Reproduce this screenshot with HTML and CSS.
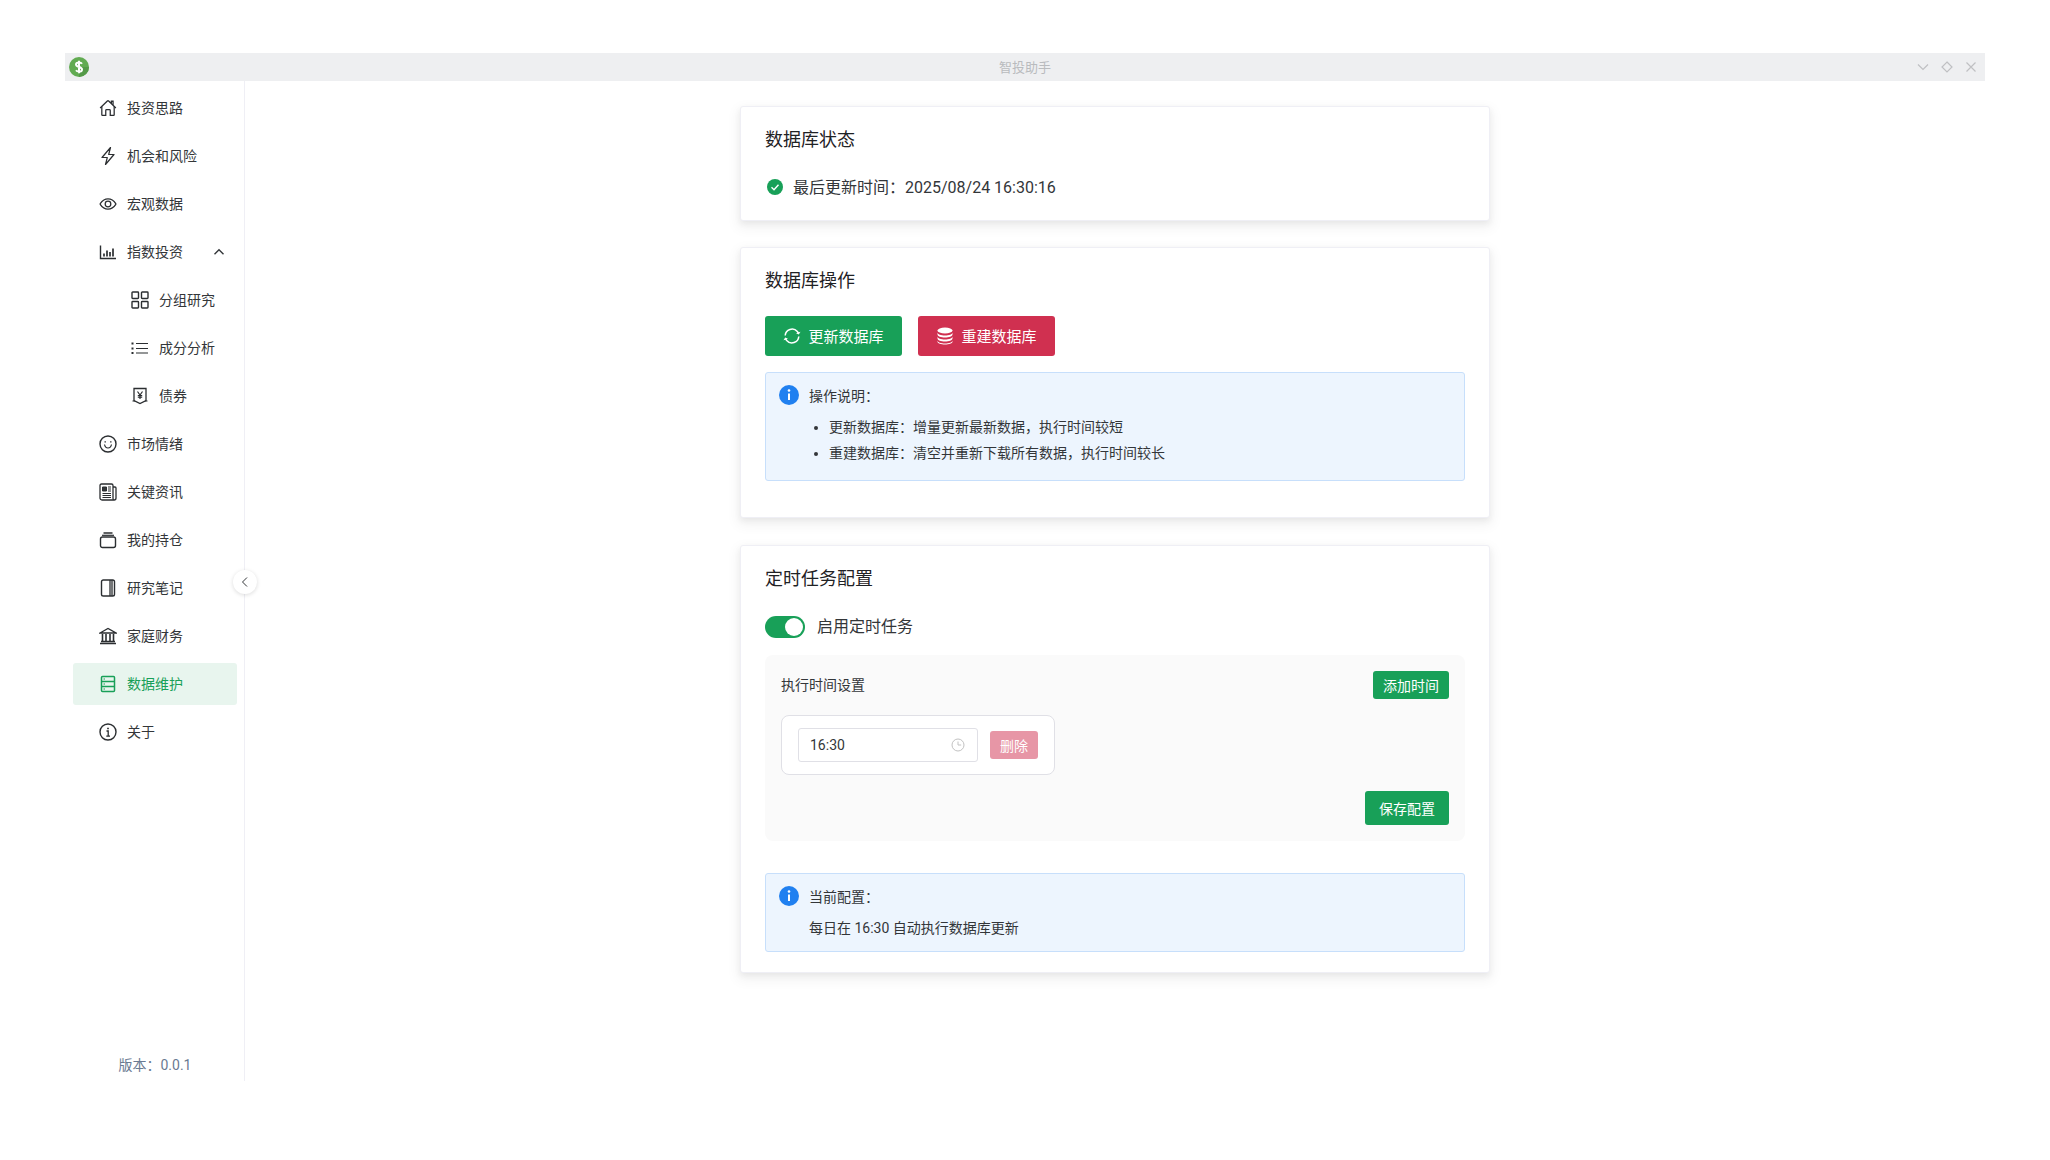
FILE: index.html
```html
<!DOCTYPE html>
<html lang="zh-CN">
<head>
<meta charset="utf-8">
<title>智投助手</title>
<link rel="stylesheet" href="styles.css">
</head>
<body>
<div class="window">
  <header class="titlebar">
    <svg class="logo" viewBox="0 0 20 20"><circle cx="10" cy="10" r="10" fill="#62ab52"/><path d="M10 10 20 10A10 10 0 0 1 10 20Z" fill="#549a48"/><path d="M13 6.700C12.400 5.800 11.300 5.400 10 5.400 8.300 5.400 7 6.200 7 7.600 7 9 8.300 9.500 10 10 11.700 10.500 13 11 13 12.400 13 13.800 11.700 14.600 10 14.600 8.700 14.600 7.600 14.200 7 13.300M10 3.800V16.200" fill="none" stroke="#fff" stroke-width="2"/></svg>
    <span class="title">智投助手</span>
    <div class="winctl">
      <svg viewBox="0 0 12 12"><path d="M1 3.500 6 8.500 11 3.500"/></svg>
      <svg viewBox="0 0 12 12"><path d="M6 1 11 6 6 11 1 6Z"/></svg>
      <svg viewBox="0 0 12 12"><path d="M1.500 1.500 10.500 10.500M10.500 1.500 1.500 10.500"/></svg>
    </div>
  </header>
  <div class="body">
    <aside class="sidebar">
      <nav class="menu">
        <a class="item"><svg class="ic" viewBox="0 0 512 512"><path d="M80 212v236a16 16 0 0 0 16 16h96V328a24 24 0 0 1 24-24h80a24 24 0 0 1 24 24v136h96a16 16 0 0 0 16-16V212"/><path d="M480 256 266.900 52c-5-5.300-16.700-5.300-21.800 0L32 256M400 179V64h-48v69"/></svg>投资思路</a>
        <a class="item"><svg class="ic" viewBox="0 0 18 18"><path d="M11.500 .5 3 10.500H8.300L6.500 17.500 15 7.500H9.700Z" stroke-width="1.200" stroke-linejoin="round"/></svg>机会和风险</a>
        <a class="item"><svg class="ic" viewBox="0 0 512 512"><path d="M255.700 112C178 112 98.300 157 35.500 247a16 16 0 0 0-.3 17.800C83.500 340.400 162.200 400 255.700 400c92.500 0 173-59.800 221.400-135.500a16.200 16.200 0 0 0 0-17.500C428.600 172 347.600 112 255.700 112Z"/><circle cx="256" cy="256" r="80"/></svg>宏观数据</a>
        <a class="item"><svg class="ic" viewBox="0 0 18 18"><path d="M1.500 2.500V15.500H17" stroke-width="1.400"/><path d="M5 13.500V10.500M8 13.500V7.500M11 13.500V9M14 13.500V5.500" stroke-width="1.700"/></svg>指数投资<svg class="chev" viewBox="0 0 12 12"><path d="M1.500 8.200 6 3.800 10.500 8.200"/></svg></a>
        <a class="item child"><svg class="ic" viewBox="0 0 18 18"><rect x="1" y="1" width="6.500" height="6.500" rx=".7" stroke-width="1.400"/><rect x="10.500" y="1" width="6.500" height="6.500" rx=".7" stroke-width="1.400"/><rect x="1" y="10.500" width="6.500" height="6.500" rx=".7" stroke-width="1.400"/><rect x="10.500" y="10.500" width="6.500" height="6.500" rx=".7" stroke-width="1.400"/></svg>分组研究</a>
        <a class="item child"><svg class="ic" viewBox="0 0 18 18"><path d="M5 4.500H17M5 9.500H17M5 14H17" stroke-width="1.200"/><path d="M1.500 3.500V5.500M1.500 8.500V10.500M1.500 13V15" stroke-width="2"/></svg>成分分析</a>
        <a class="item child"><svg class="ic" viewBox="0 0 18 18"><path d="M3 1.500H15V13.500L9 16.500 3 13.500Z" stroke-width="1.300"/><path d="M1.500 14H4M14 14H16.500" stroke-width="1.200"/><path d="M6.500 4.500 9 8 11.500 4.500M9 8V12M6.800 8.500H11.200M6.800 10.200H11.200" stroke-width="1.200"/></svg>债券</a>
        <a class="item"><svg class="ic" viewBox="0 0 18 18"><circle cx="9" cy="9" r="8" stroke-width="1.400"/><path d="M5.500 9.500C6 12 7.500 13 9 13S12 12 12.500 9.500" stroke-width="1.200"/><path d="M6.200 6.200V7.400M11.800 6.200V7.400" stroke-width="1.400"/></svg>市场情绪</a>
        <a class="item"><svg class="ic" viewBox="0 0 18 18"><path d="M14 4H16C16.800 4 17 4.500 17 5V15C17 16 16 17 15.200 17H3C1.800 17 1 16 1 15V2.500C1 1.700 1.500 1 2.500 1H12.500C13.500 1 14 1.700 14 2.500V15.500C14 16.300 14.600 17 15.200 17" stroke-width="1.300"/><path d="M3.500 4H7.500V8H3.500Z" fill="#333639" stroke-width="1"/><path d="M9 4H12M9 6H12M9 8H12M3.500 10.500H12M3.500 12.500H12M3.500 14.500H12" stroke-width="1.100"/></svg>关键资讯</a>
        <a class="item"><svg class="ic" viewBox="0 0 18 18"><rect x="1.500" y="6" width="15" height="10.500" rx="2" stroke-width="1.400"/><path d="M3 4.300H15" stroke-width="1.200"/><path d="M4.500 2H13.500" stroke-width="1.500"/></svg>我的持仓</a>
        <a class="item"><svg class="ic" viewBox="0 0 18 18"><rect x="2.500" y="1" width="13" height="16" rx="1.800" stroke-width="1.400"/><path d="M11 1V17M13 1V17" stroke-width="1.300"/></svg>研究笔记</a>
        <a class="item"><svg class="ic" viewBox="0 0 18 18"><path d="M1 6 9 1.500 17 6ZM1 16.500H17M2 14.500H16" stroke-width="1.300"/><path d="M3.500 7V14M7 7V14M11 7V14M14.500 7V14" stroke-width="1.600"/></svg>家庭财务</a>
        <a class="item active"><svg class="ic" viewBox="0 0 18 18"><rect x="2.500" y="1.500" width="13" height="15" rx="1" stroke-width="1.500"/><path d="M2.500 6.500H15.500M2.500 11.500H15.500" stroke-width="1.400"/><path d="M4.500 4H6M4.500 9H6M4.500 14H6" stroke-width="1"/></svg>数据维护</a>
        <a class="item"><svg class="ic" viewBox="0 0 18 18"><circle cx="9" cy="9" r="8" stroke-width="1.400"/><path d="M7.500 8H9.200V13M7.300 13.200H11" stroke-width="1.300"/><path d="M9 4.700V6.200" stroke-width="1.700"/></svg>关于</a>
      </nav>
      <footer class="version">版本：0.0.1</footer>
      <button class="collapse"><svg viewBox="0 0 12 12"><path d="M8 1.500 3.500 6 8 10.500"/></svg></button>
    </aside>
    <main class="main">
      <section class="card">
        <h2 class="card-title">数据库状态</h2>
        <div class="status">
          <svg class="check" viewBox="0 0 16 16"><circle cx="8" cy="8" r="8" fill="#18a058"/><path d="M4.500 8.300 7 10.700 11.500 5.700" fill="none" stroke="#fff" stroke-width="1.400"/></svg>
          <span>最后更新时间：2025/08/24 16:30:16</span>
        </div>
      </section>
      <section class="card">
        <h2 class="card-title">数据库操作</h2>
        <div class="actions">
          <button class="btn btn-lg green"><svg class="btn-ic" viewBox="0 0 18 18"><path d="M2.200 8.500A6.900 6.900 0 0 1 14.300 4.500L15.500 6.200M15.800 9.500A6.900 6.900 0 0 1 3.700 13.500L2.500 11.800" fill="none" stroke="#fff" stroke-width="1.500"/><path d="M17.500 4.800 15.800 7.500 13 6.200ZM.5 13.200 2.200 10.500 5 11.800Z" fill="#fff"/></svg>更新数据库</button>
          <button class="btn btn-lg red"><svg class="btn-ic" viewBox="0 0 18 18" fill="#fff"><ellipse cx="9" cy="3.500" rx="7.500" ry="3"/><path d="M1.500 5.500V7.500C1.500 9.200 5 10.500 9 10.500S16.500 9.200 16.500 7.500V5.500C16.500 7.200 13 8.500 9 8.500S1.500 7.200 1.500 5.500ZM1.500 9.500V11.500C1.500 13.200 5 14.500 9 14.500S16.500 13.200 16.500 11.500V9.500C16.500 11.200 13 12.500 9 12.500S1.500 11.200 1.500 9.500ZM1.500 13.500V14.800C1.500 16.500 5 17.500 9 17.500S16.500 16.500 16.500 14.800V13.500C16.500 15.200 13 16.500 9 16.500S1.500 15.200 1.500 13.500Z"/></svg>重建数据库</button>
        </div>
        <div class="alert alert-ops">
          <svg class="alert-ic" viewBox="0 0 20 20"><circle cx="10" cy="10" r="10" fill="#2080f0"/><circle cx="10" cy="5.500" r="1.300" fill="#fff"/><path d="M10 8.500V15" stroke="#fff" stroke-width="2"/></svg>
          <div class="alert-body">
            <div class="alert-title">操作说明：</div>
            <ul class="alert-list">
              <li>更新数据库：增量更新最新数据，执行时间较短</li>
              <li>重建数据库：清空并重新下载所有数据，执行时间较长</li>
            </ul>
          </div>
        </div>
      </section>
      <section class="card">
        <h2 class="card-title">定时任务配置</h2>
        <div class="toggle-row">
          <span class="switch"><span class="knob"></span></span>
          <span>启用定时任务</span>
        </div>
        <div class="panel">
          <div class="panel-head">
            <span>执行时间设置</span>
            <button class="btn btn-sm green">添加时间</button>
          </div>
          <div class="time-row">
            <div class="time-input">
              <span>16:30</span>
              <svg class="clock" viewBox="0 0 14 14"><circle cx="7" cy="7" r="6"/><path d="M7 3.500V7H10.200"/></svg>
            </div>
            <button class="btn btn-sm red disabled">删除</button>
          </div>
          <div class="panel-foot">
            <button class="btn btn-md green">保存配置</button>
          </div>
        </div>
        <div class="alert alert-current">
          <svg class="alert-ic" viewBox="0 0 20 20"><circle cx="10" cy="10" r="10" fill="#2080f0"/><circle cx="10" cy="5.500" r="1.300" fill="#fff"/><path d="M10 8.500V15" stroke="#fff" stroke-width="2"/></svg>
          <div class="alert-body">
            <div class="alert-title">当前配置：</div>
            <div class="alert-text">每日在 16:30 自动执行数据库更新</div>
          </div>
        </div>
      </section>
    </main>
  </div>
</div>
</body>
</html>
```
FILE: styles.css
```css
* { box-sizing: border-box; }
html, body { margin: 0; height: 100%; }
body {
  background: #fff;
  padding: 53px 65px 0;
  font-family: Roboto, "Noto Sans CJK SC", sans-serif;
  font-size: 14px;
  line-height: 1.6;
  color: #333639;
}
.window { display: flex; flex-direction: column; width: 1920px; height: 1028px; }
.titlebar {
  position: relative;
  display: flex;
  align-items: center;
  justify-content: center;
  height: 28px;
  padding-top: 2px;
  background: #eeeff1;
  flex: none;
}
.logo { position: absolute; left: 4px; top: 4px; width: 20px; height: 20px; }
.title { font-size: 13px; color: #b9bbbe; }
.winctl { position: absolute; right: 8px; top: 8px; display: flex; gap: 12px; }
.winctl svg { width: 12px; height: 12px; fill: none; stroke: #bfc0c3; stroke-width: 1.200; }
.body { display: flex; flex: 1; min-height: 0; }
.sidebar {
  position: relative;
  display: flex;
  flex-direction: column;
  width: 180px;
  flex: none;
  border-right: 1px solid #efeff5;
}
.menu { display: flex; flex-direction: column; gap: 6px; padding: 6px 7px 0 8px; }
.item {
  display: flex;
  align-items: center;
  gap: 10px;
  height: 42px;
  padding-left: 26px;
  border-radius: 3px;
  font-size: 14px;
  color: #333639;
  position: relative;
}
.item.child { padding-left: 58px; }
.item.active { background: #e8f5ee; color: #18a058; }
.ic { width: 18px; height: 18px; flex: none; fill: none; stroke: #2b2e31; stroke-width: 36; stroke-linecap: butt; }
.item.active .ic { stroke: #18a058; }
.chev { position: absolute; left: 140px; top: 15px; width: 12px; height: 12px; fill: none; stroke: #333639; stroke-width: 1.400; }
.version { margin-top: auto; padding: 0 0 5px 1px; text-align: center; color: #6a7a92; font-size: 14px; }
.collapse {
  position: absolute;
  left: 168px;
  top: 489px;
  display: flex;
  align-items: center;
  justify-content: center;
  width: 24px;
  height: 24px;
  padding: 0;
  border: 0;
  border-radius: 50%;
  background: #fff;
  box-shadow: 0 1px 4px rgba(0, 0, 0, .14);
}
.collapse svg { width: 12px; height: 12px; fill: none; stroke: #333639; stroke-width: 1; }
.main { flex: 1; display: flex; flex-direction: column; align-items: center; gap: 26.500px; padding-top: 25px; }
.card {
  width: 750px;
  padding: 19px 24px 20px;
  border: 1px solid #efeff5;
  border-radius: 3px;
  background: #fff;
  box-shadow: 0 1px 2px -2px rgba(0,0,0,.08), 0 3px 6px 0 rgba(0,0,0,.06), 0 5px 12px 4px rgba(0,0,0,.04);
}
.card-title { margin: 0 0 20px; font-size: 18px; font-weight: 400; line-height: 1.6; color: #1f2225; }
.status { display: flex; align-items: center; gap: 10px; padding-left: 2px; font-size: 16px; line-height: 25px; }
.check { width: 16px; height: 16px; flex: none; }
.actions { display: flex; gap: 16px; margin-bottom: 16px; }
.btn {
  display: inline-flex;
  align-items: center;
  justify-content: center;
  border: 0;
  border-radius: 3px;
  color: #fff;
  font-family: inherit;
  padding: 0;
}
.green { background: #18a058; }
.red { background: #d03050; }
.disabled { opacity: .5; }
.btn-lg { width: 137px; height: 40px; padding-bottom: 2px; font-size: 15px; gap: 7px; }
.btn-ic { width: 18px; height: 18px; margin-top: 2px; flex: none; }
.btn-sm { width: 76px; height: 28px; font-size: 14px; }
.btn-sm.red { width: 48px; }
.btn-md { width: 84px; height: 34px; font-size: 14px; }
.alert {
  display: flex;
  gap: 10px;
  padding: 12px 13px;
  border: 1px solid #c7dffb;
  border-radius: 3px;
  background: #edf5fe;
}
.alert-ops { margin-bottom: 16px; }
.alert-ic { width: 20px; height: 20px; flex: none; }
.alert-body { flex: 1; }
.alert-list { margin: 9px 0 4px; padding-left: 20px; }
.alert-list li { margin-bottom: 4px; line-height: 22px; }
.alert-list li:last-child { margin-bottom: 0; }
.alert-text { margin-top: 8px; }
.toggle-row { display: flex; align-items: center; gap: 12px; font-size: 16px; margin-bottom: 16px; }
.switch {
  position: relative;
  display: block;
  width: 40px;
  height: 22px;
  border-radius: 11px;
  background: #18a058;
}
.knob { position: absolute; right: 2px; top: 2px; width: 18px; height: 18px; border-radius: 50%; background: #fff; }
.panel { display: flex; flex-direction: column; gap: 16px; padding: 16px; margin-bottom: 32px; border-radius: 8px; background: #fafafa; }
.panel-head { display: flex; justify-content: space-between; align-items: center; }
.time-row {
  display: flex;
  align-items: center;
  gap: 12px;
  align-self: flex-start;
  width: 274px;
  height: 60px;
  padding: 0 16px;
  border: 1px solid #e0e0e6;
  border-radius: 8px;
  background: #fff;
}
.time-input {
  display: flex;
  align-items: center;
  justify-content: space-between;
  width: 180px;
  height: 34px;
  padding: 0 12px 0 11px;
  border: 1px solid #e0e0e6;
  border-radius: 3px;
}
.clock { width: 14px; height: 14px; fill: none; stroke: #c2c2c2; stroke-width: 1; }
.panel-foot { display: flex; justify-content: flex-end; }
```
